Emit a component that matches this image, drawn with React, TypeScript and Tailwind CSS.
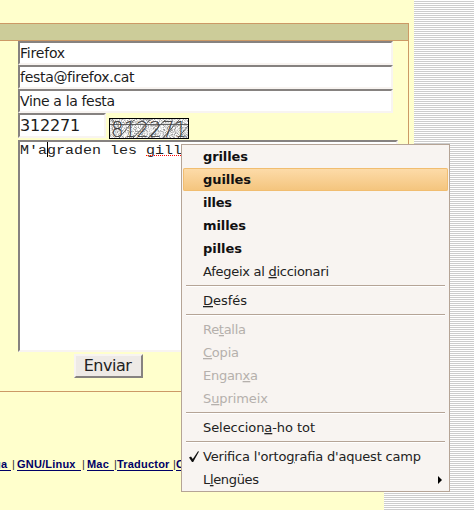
import React from "react";

const SANS = "font-['DejaVu_Sans',sans-serif]";

function Field({ value, className }: { value: string; className: string }) {
  return (
    <div
      className={`border-2 border-t-[#868280] border-l-[#868280] border-r-[#f8f4f1] border-b-[#f8f4f1] bg-white whitespace-nowrap text-[#1c1c1c] ${SANS} ${className}`}
    >
      {value}
    </div>
  );
}

function Captcha() {
  const specks: React.ReactNode[] = [];
  const shades = ["#ffffff", "#dcdcdc", "#b0b0b0", "#ececec", "#c8c8c8", "#f6f6f6", "#9c9c9c", "#e2e2e2"];
  let seed = 4711;
  for (let y = 1; y < 20; y++) {
    for (let x = 1; x < 79; x++) {
      seed = (seed * 1103515245 + 12345) % 2147483648;
      specks.push(<rect key={`${x}-${y}`} x={x} y={y} width="1" height="1" fill={shades[(seed >> 12) & 7]} />);
    }
  }
  return (
    <svg width="80" height="21" viewBox="0 0 80 21" className="mt-[5px] ml-[3px] block shrink-0 overflow-visible">
      <rect width="80" height="21" fill="#000" />
      <g shapeRendering="crispEdges">{specks}</g>
      <g stroke="#555" strokeWidth="0.9" fill="none">
        <path d="M1 6.5H79M3 1l3 4M10 20L25 2M24 20L41 2M39 20L56 2M54 20L70 2M69 20l10-12" />
      </g>
      <text x="2" y="18.5" fontSize="22" textLength="76" lengthAdjust="spacingAndGlyphs" fill="#3a3a3a" className="font-['DejaVu_Sans',sans-serif] font-extralight">
        812271
      </text>
    </svg>
  );
}

function Item({
  parts,
  width,
  bold,
  disabled,
  active,
  children,
}: {
  parts: [string, string, string];
  width: number;
  bold?: boolean;
  disabled?: boolean;
  active?: boolean;
  children?: React.ReactNode;
}) {
  return (
    <div
      className={`relative mx-px flex h-[23px] items-center pl-5 ${
        active
          ? "rounded-[2px] bg-gradient-to-b from-[#fddcaa] to-[#f4c47c] shadow-[inset_0_0_0_1px_#f1bd70]"
          : ""
      }`}
    >
      {children}
      <svg width="240" height="23" className="block overflow-visible">
        <text
          x="0"
          y="16"
          fontSize="13"
          textLength={width}
          lengthAdjust="spacing"
          fill={disabled ? "#b5b0ac" : bold ? "#111" : "#222"}
          className={`font-['DejaVu_Sans',sans-serif] ${bold ? "font-bold" : "font-normal"}`}
        >
          {parts[0]}
          <tspan className="underline">{parts[1]}</tspan>
          {parts[2]}
        </text>
      </svg>
    </div>
  );
}

function Separator() {
  return (
    <div className="mr-1 ml-1 flex h-[6px] flex-col pt-0.5">
      <div className="h-px bg-[#b5a496]" />
      <div className="h-px bg-white" />
    </div>
  );
}

function Menu() {
  return (
    <div className="absolute top-[144px] left-[181px] h-[348px] w-[269px] border border-[#b5a496] bg-[#f8f4f1]">
      <Item parts={["grilles", "", ""]} width={45} bold />
      <Item parts={["guilles", "", ""]} width={48} bold active />
      <Item parts={["illes", "", ""]} width={29} bold />
      <Item parts={["milles", "", ""]} width={43} bold />
      <Item parts={["pilles", "", ""]} width={39} bold />
      <Item parts={["Afegeix al ", "d", "iccionari"]} width={126} />
      <Separator />
      <Item parts={["", "D", "esfés"]} width={44} />
      <Separator />
      <Item parts={["Re", "t", "alla"]} width={43} disabled />
      <Item parts={["", "C", "opia"]} width={36} disabled />
      <Item parts={["Engan", "x", "a"]} width={55} disabled />
      <Item parts={["S", "u", "primeix"]} width={65} disabled />
      <Separator />
      <Item parts={["Seleccion", "a", "-ho tot"]} width={112} />
      <Separator />
      <Item parts={["Verifica l'orto", "g", "rafia d'aquest camp"]} width={218}>
        <svg width="12" height="13" viewBox="0 0 12 13" className="absolute top-[5px] left-[5px]">
          <path d="M1 7.5L3 6.5 4.8 9 10 1.2 11 1.4 5.2 12H4Z" fill="#111" />
        </svg>
      </Item>
      <Item parts={["L", "l", "engües"]} width={56}>
        <svg width="4" height="8" viewBox="0 0 4 8" className="absolute top-[8px] right-[6px]">
          <path d="M0 0L4 4 0 8Z" fill="#000" />
        </svg>
      </Item>
    </div>
  );
}

function FooterLink({ children, className }: { children: string; className: string }) {
  return (
    <span className={`block h-[13px] shrink-0 border-b border-[#000066] whitespace-pre ${className}`}>{children}</span>
  );
}

export default function App() {
  return (
    <div className="relative h-[510px] w-[474px] overflow-hidden bg-[repeating-linear-gradient(to_bottom,#fff_0px,#fff_1px,#ccc_1px,#ccc_2px)]">
      <div className="h-[450px] w-[414px] bg-[#ffffcc] pt-[23px]">
        <div className="h-[369px] w-[409px] border border-l-0 border-[#cc9966]">
          <div className="h-[17px] border-b border-[#cc9966] bg-[#cccc99]" />
          <div className="flex flex-col pl-[18px]">
            <Field value="Firefox" className="h-6 w-[375px] text-[14px] leading-[20px] tracking-[-0.2px]" />
            <Field value="festa@firefox.cat" className="h-6 w-[375px] text-[14px] leading-[20px] tracking-[-0.3px]" />
            <Field value="Vine a la festa" className="h-6 w-[375px] text-[14px] leading-[20px] tracking-[-0.35px]" />
            <div className="flex h-[27px]">
              <Field value="312271" className="h-[25px] w-[88px] text-[16px] leading-[21px] tracking-[-0.2px]" />
              <Captcha />
            </div>
            <div className="h-[212px] w-[380px] border-2 border-t-[#868280] border-r-[#f8f4f1] border-b-[#f8f4f1] border-l-[#868280] bg-white">
              <svg width="170" height="18" className="block">
                <text x="0" y="12" fontSize="12" textLength="162" lengthAdjust="spacingAndGlyphs" fill="#222" className="font-['Liberation_Mono',monospace] whitespace-pre">
                  M'agraden les gill
                </text>
                <path d="M27.5 0V15" stroke="#000" />
                <path d="M126 13.5H170" stroke="#f00" strokeDasharray="1 1" shapeRendering="crispEdges" />
              </svg>
            </div>
            <div className="mt-0.5 ml-14 flex h-6 w-[69px] items-center justify-center border-2 border-t-[#f8f4f1] border-r-[#868280] border-b-[#868280] border-l-[#f8f4f1] bg-[#eeeae6] pr-0.5">
              <span className="font-['DejaVu_Sans',sans-serif] text-[16px] leading-5 tracking-[-0.5px] text-[#222]">Enviar</span>
            </div>
          </div>
        </div>
      </div>
      <div className="h-[60px] w-[384px] bg-[#ffffcc] pt-2">
        <div className="-ml-[6px] flex font-['Liberation_Sans',sans-serif] text-[11px] leading-[13px] font-bold tracking-[0.2px] text-[#000066]">
          <FooterLink className="w-[17px]">ga </FooterLink>
          <span className="w-[6px] pl-px font-normal text-[#333]">|</span>
          <FooterLink className="w-16">GNU/Linux </FooterLink>
          <span className="w-[6px] pl-px font-normal text-[#333]">|</span>
          <FooterLink className="w-[27px]">Mac </FooterLink>
          <span className="w-[3px] font-normal text-[#333]">|</span>
          <FooterLink className="w-14">Traductor</FooterLink>
          <span className="w-[3px] font-normal text-[#333]">|</span>
          <FooterLink className="w-[60px]">C</FooterLink>
        </div>
      </div>
      <Menu />
    </div>
  );
}
